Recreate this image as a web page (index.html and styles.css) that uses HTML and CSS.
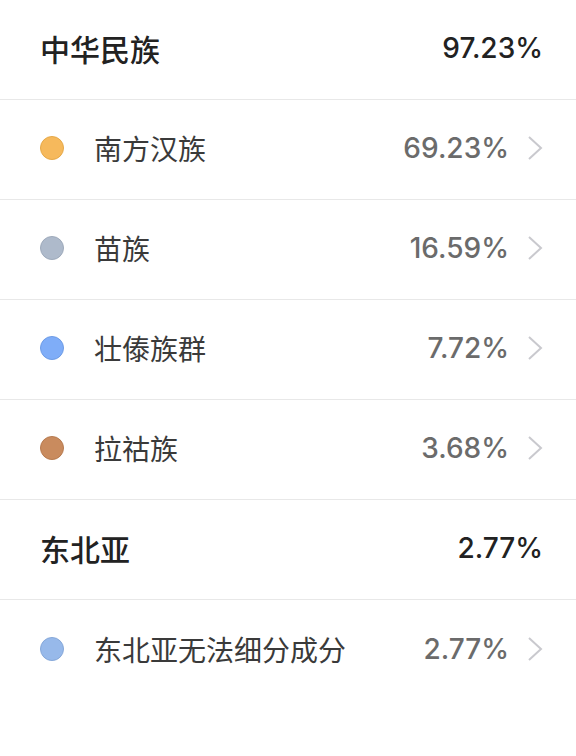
FILE: index.html
```html
<!DOCTYPE html>
<html lang="zh-CN">
<head>
<meta charset="utf-8">
<link rel="stylesheet" href="styles.css">
</head>
<body>
<div class="list">
  <div class="row group">
    <span class="name">中华民族</span>
    <span class="pct">97.23%</span>
  </div>
  <div class="row item">
    <span class="dot dot-orange"></span>
    <span class="name">南方汉族</span>
    <span class="pct">69.23%</span>
    <svg class="chev" width="16" height="26" viewBox="0 0 16 26"><polyline points="2,2 14,13 2,24" fill="none" stroke="#c9c9ce" stroke-width="2"/></svg>
  </div>
  <div class="row item">
    <span class="dot dot-gray"></span>
    <span class="name">苗族</span>
    <span class="pct">16.59%</span>
    <svg class="chev" width="16" height="26" viewBox="0 0 16 26"><polyline points="2,2 14,13 2,24" fill="none" stroke="#c9c9ce" stroke-width="2"/></svg>
  </div>
  <div class="row item">
    <span class="dot dot-blue"></span>
    <span class="name">壮傣族群</span>
    <span class="pct">7.72%</span>
    <svg class="chev" width="16" height="26" viewBox="0 0 16 26"><polyline points="2,2 14,13 2,24" fill="none" stroke="#c9c9ce" stroke-width="2"/></svg>
  </div>
  <div class="row item">
    <span class="dot dot-brown"></span>
    <span class="name">拉祜族</span>
    <span class="pct">3.68%</span>
    <svg class="chev" width="16" height="26" viewBox="0 0 16 26"><polyline points="2,2 14,13 2,24" fill="none" stroke="#c9c9ce" stroke-width="2"/></svg>
  </div>
  <div class="row group">
    <span class="name">东北亚</span>
    <span class="pct">2.77%</span>
  </div>
  <div class="row item last">
    <span class="dot dot-lightblue"></span>
    <span class="name">东北亚无法细分成分</span>
    <span class="pct">2.77%</span>
    <svg class="chev" width="16" height="26" viewBox="0 0 16 26"><polyline points="2,2 14,13 2,24" fill="none" stroke="#c9c9ce" stroke-width="2"/></svg>
  </div>
</div>
</body>
</html>
```
FILE: styles.css
```css
html, body {
  margin: 0;
  padding: 0;
  background: #ffffff;
}
body {
  font-family: "Inter", "Noto Sans CJK SC", sans-serif;
}
.list {
  display: flex;
  flex-direction: column;
}
.row {
  display: flex;
  align-items: center;
  height: 100px;
  box-sizing: border-box;
  border-bottom: 1px solid #e8e8e8;
  padding: 0 33px 3px 40px;
}
.row.last {
  border-bottom: none;
}
.group .name {
  flex: 1;
  font-family: "Noto Sans CJK SC", sans-serif;
  font-size: 30px;
  line-height: 1;
  font-weight: 500;
  color: #222222;
}
.group .pct {
  font-size: 28px;
  line-height: 1;
  font-weight: 500;
  color: #222222;
}
.dot {
  width: 22px;
  height: 22px;
  border-radius: 50%;
  border: 1px solid;
  margin-right: 30px;
  flex: none;
}
.dot-orange { background: #f6b95c; border-color: #e6a949; }
.dot-gray { background: #aebacb; border-color: #9eaabb; }
.dot-blue { background: #7fadf8; border-color: #6e9ce6; }
.dot-brown { background: #c98b5e; border-color: #b77b50; }
.dot-lightblue { background: #97b9ea; border-color: #86a8d9; }
.item .name {
  flex: 1;
  font-family: "Noto Sans CJK SC", sans-serif;
  font-size: 28px;
  line-height: 1;
  font-weight: 400;
  color: #3a3a3a;
}
.item .pct {
  font-size: 28px;
  line-height: 1;
  font-weight: 500;
  color: #6b6b6b;
  margin-right: 18px;
}
.chev {
  flex: none;
}
```
